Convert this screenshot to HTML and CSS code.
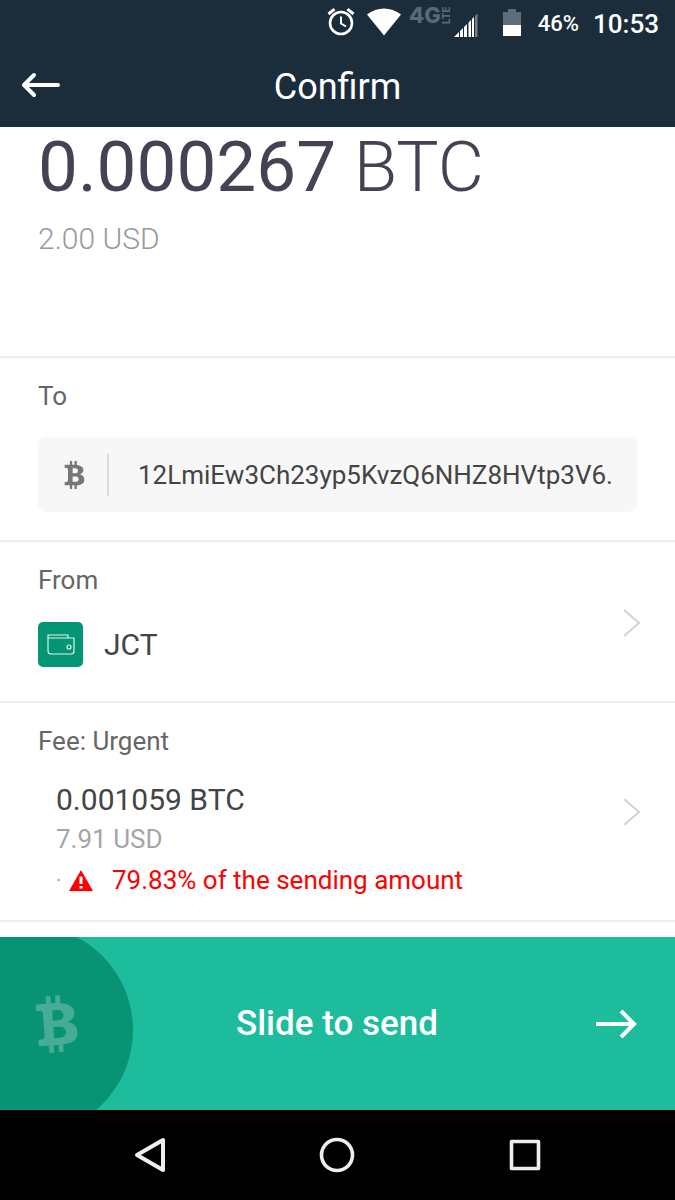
FILE: index.html
```html
<!DOCTYPE html>
<html lang="en">
<head>
<meta charset="utf-8">
<meta name="viewport" content="width=device-width, initial-scale=1">
<title>Confirm</title>
<link rel="stylesheet" href="styles.css">
</head>
<body class="screen">
<svg class="defs" width="0" height="0" aria-hidden="true">
  <symbol id="bitcoin" viewBox="0 0 21 30">
    <path fill-rule="evenodd" d="M0 4H5.500V0H8V4H10.500V0H13V4.200C18 4.700 20 7 20 9.600C20 12 18.500 13.700 16 14.300C19.500 15 21 17.300 21 20C21 23.700 18.500 25.700 13 26V30H10.500V26H8V30H5.500V26H0V22.500H2Q3.500 22.500 3.500 21V9Q3.500 7.500 2 7.500H0ZM8.500 7.700H11.500A2.700 2.700 0 0 1 11.500 13.100H8.500ZM8.500 16.500H12A2.900 2.900 0 0 1 12 22.300H8.500Z"/>
  </symbol>
</svg>

<div class="status">
  <svg class="status-alarm" width="28" height="28" viewBox="0 0 28 28" fill="none" stroke="#fff" aria-label="Alarm"><circle cx="14" cy="15" r="11" stroke-width="2.600"/><path d="M14 8.500V15.500L19 18.500" stroke-width="2"/><path d="M1.500 6L7.500 1.200M26.500 6L20.500 1.200" stroke-width="3"/></svg>
  <svg class="status-wifi" width="34" height="28" viewBox="0 0 34 28" fill="#fff" aria-label="Wi-Fi"><path d="M0 6.500C10-1.500 24-1.500 34 6.500L17 27.500Z"/></svg>
  <span class="network"><span class="network-gen">4G</span><span class="network-lte">LTE</span></span>
  <svg class="status-signal" width="24" height="24" viewBox="0 0 24 24" aria-label="Signal"><path fill="#fff" d="M0 24L5 19V24ZM6 24V18L9 15V24ZM10 24V14L13 11V24ZM14.500 24V9.500L17 7V24ZM18 24V6L20 4V24Z"/><path fill="#74808a" d="M21 24V3L23.500 .500V24Z"/></svg>
  <svg class="status-battery" width="18" height="28" viewBox="0 0 18 28" aria-label="Battery"><path fill="#5f6d77" d="M0 3H5V0H13V3H18V16H0Z"/><path fill="#fff" d="M0 16H18V27H0Z"/></svg>
  <span class="percent">46%</span>
  <span class="clock">10:53</span>
</div>

<header class="topbar">
  <button class="back" type="button" aria-label="Back">
    <svg width="40" height="28" viewBox="0 0 40 28" fill="none" stroke="#fff" stroke-width="4" stroke-linecap="round" stroke-linejoin="round"><path d="M37 14H3M13 4L3 14L13 24"/></svg>
  </button>
  <h1 class="title">Confirm</h1>
</header>

<main class="content">
  <section class="summary">
    <p class="amount">0.000267 <span class="unit">BTC</span></p>
    <p class="fiat">2.00 USD</p>
  </section>

  <section class="row row-to">
    <h2 class="label">To</h2>
    <div class="address">
      <svg class="coin" width="21" height="28"><use href="#bitcoin"/></svg>
      <span class="address-text">12LmiEw3Ch23yp5KvzQ6NHZ8HVtp3V6.</span>
    </div>
  </section>

  <section class="row row-from">
    <h2 class="label">From</h2>
    <div class="wallet">
      <span class="wallet-icon"><svg width="28" height="21" viewBox="0 0 28 21" fill="none" stroke="#d8f5ec" stroke-width="1.200"><path d="M1 4V17Q1 20 4 20H24Q27 20 27 17V4H1V1H21V4"/><circle cx="22" cy="13" r="2"/></svg></span>
      <span class="value">JCT</span>
    </div>
    <button class="more more-from" type="button" aria-label="Change wallet"><svg width="18" height="30" viewBox="0 0 18 30" fill="none" stroke="#d2d2d2" stroke-width="2"><path d="M1 2L16 15L1 28"/></svg></button>
  </section>

  <section class="row row-fee">
    <h2 class="label">Fee: Urgent</h2>
    <div class="fee">
      <p class="value">0.001059 BTC</p>
      <p class="fee-fiat">7.91 USD</p>
      <p class="warning"><span class="dot">·</span><svg width="24" height="21" viewBox="0 0 24 21" aria-label="Warning"><path fill="#f00" d="M12 0L24 21H0Z"/><path fill="#fff" d="M10.500 6.500H13.500V14H10.500ZM10.500 16H13.500V18.500H10.500Z"/></svg><span class="warning-text">79.83% of the sending amount</span></p>
    </div>
    <button class="more more-fee" type="button" aria-label="Change fee"><svg width="18" height="30" viewBox="0 0 18 30" fill="none" stroke="#d2d2d2" stroke-width="2"><path d="M1 2L16 15L1 28"/></svg></button>
  </section>
</main>

<button class="send" type="button">
  <span class="thumb"></span>
  <svg class="send-coin" width="40" height="58"><use href="#bitcoin"/></svg>
  <span class="send-text">Slide to send</span>
  <svg class="send-arrow" width="42" height="30" viewBox="0 0 42 30" fill="none" stroke="#fff" stroke-width="4"><path d="M1 15H39M26 2L39 15L26 28"/></svg>
</button>

<nav class="navbar">
  <button type="button" aria-label="Back"><svg width="36" height="36" viewBox="0 0 36 36" fill="none" stroke="#eee" stroke-width="4" stroke-linejoin="round"><path d="M31 3V33L5 18Z"/></svg></button>
  <button type="button" aria-label="Home"><svg width="36" height="36" viewBox="0 0 36 36" fill="none" stroke="#eee" stroke-width="3.600"><circle cx="18" cy="18" r="15.500"/></svg></button>
  <button type="button" aria-label="Recent apps"><svg width="36" height="36" viewBox="0 0 36 36" fill="none" stroke="#eee" stroke-width="3.600" stroke-linejoin="round"><path d="M4.500 4.500H31.500V31.500H4.500Z"/></svg></button>
</nav>
</body>
</html>
```

FILE: styles.css
```css
* { box-sizing: border-box; }

.screen {
  margin: 0;
  min-height: 100vh;
  display: flex;
  flex-direction: column;
  background: #fff;
  color: #444;
  font-family: Roboto, "Liberation Sans", sans-serif;
}

h1, h2, p { margin: 0; font-weight: 400; }
svg { display: block; flex: none; }
.defs { position: absolute; }

button {
  padding: 0;
  border: 0;
  background: none;
  color: inherit;
  font: inherit;
  cursor: pointer;
}

.status {
  display: flex;
  justify-content: flex-end;
  height: 46px;
  padding: 8px 16px 0 0;
  background: #1b2d3b;
  color: #fff;
}
.status-wifi { margin-left: 12px; }
.network {
  display: flex;
  height: 18px;
  margin: -2px 2px 0 8px;
  color: #5a6873;
  font-family: Inter, Roboto, sans-serif;
  font-weight: 800;
}
.network-gen { font-size: 22px; line-height: 18px; }
.network-lte {
  writing-mode: vertical-rl;
  transform: rotate(180deg);
  font-size: 10px;
  line-height: 11px;
}
.status-signal { margin-top: 5px; }
.status-battery { margin: 1px 0 0 25px; }
.percent { margin-left: 17px; font-size: 22px; line-height: 32px; font-weight: 500; }
.clock { margin-left: 14px; font-size: 26px; line-height: 32px; font-weight: 500; }

.topbar {
  display: grid;
  grid-template-columns: 40px 1fr 40px;
  align-items: center;
  height: 81px;
  padding: 0 21px;
  background: #1b2d3b;
  color: #fff;
}
.back { height: 28px; margin-bottom: 4px; }
.title { font-size: 36px; line-height: 44px; text-align: center; }

.content { flex: 1; }
.summary { height: 229px; padding: 2px 38px 0; }
.amount { font-size: 71px; line-height: 76px; color: #444353; white-space: nowrap; }
.unit { font-weight: 300; }
.fiat { margin-top: 16px; font-size: 30px; line-height: 36px; font-weight: 300; color: #999; }

.row { position: relative; padding: 22px 38px 0; border-top: 2px solid #eee; }
.row:last-child { border-bottom: 2px solid #eee; }
.row-to { height: 184px; }
.row-from { height: 161px; }
.row-fee { height: 221px; }
.label { font-size: 26px; line-height: 32px; color: #666; }

.address {
  display: flex;
  align-items: center;
  height: 75px;
  margin-top: 25px;
  border-radius: 8px;
  background: #f7f7f7;
}
.coin { margin: 0 22px 0 26px; fill: #777; }
.address-text {
  min-width: 0;
  padding-left: 29px;
  border-left: 2px solid #ddd;
  font-size: 26px;
  line-height: 42px;
  white-space: nowrap;
  overflow: hidden;
}

.wallet { display: flex; align-items: center; gap: 21px; margin-top: 26px; }
.wallet-icon {
  display: grid;
  place-items: center;
  width: 45px;
  height: 45px;
  border-radius: 5px;
  background: #049575;
}
.value { font-size: 30px; line-height: 38px; }
.more { position: absolute; right: 34px; }
.more-from { top: 66px; }
.more-fee { top: 94px; }

.fee { padding: 24px 0 0 18px; }
.fee-fiat { font-size: 26px; line-height: 40px; color: #a5a5a5; }
.warning { display: flex; align-items: center; font-size: 26px; line-height: 42px; color: #f00; white-space: nowrap; }
.dot { width: 13px; color: #999; font-size: 20px; }
.warning-text { margin-left: 19px; }

.send {
  position: relative;
  display: grid;
  grid-template-columns: 42px 1fr 42px;
  align-items: center;
  height: 173px;
  margin-top: 15px;
  padding: 0 38px 0 37px;
  overflow: hidden;
  background: #1cbc9c;
  color: #fff;
}
.thumb {
  position: absolute;
  left: -77px;
  top: -12px;
  width: 210px;
  height: 210px;
  border-radius: 50%;
  background: #079374;
}
.send-coin { position: relative; fill: #45ac95; transform: rotate(-4deg); }
.send-text { font-size: 35px; line-height: 44px; font-weight: 500; }

.navbar {
  display: grid;
  grid-template-columns: repeat(3, 1fr);
  height: 90px;
  padding: 0 56px;
  background: #000;
}
.navbar button { display: grid; place-items: center; }
```
